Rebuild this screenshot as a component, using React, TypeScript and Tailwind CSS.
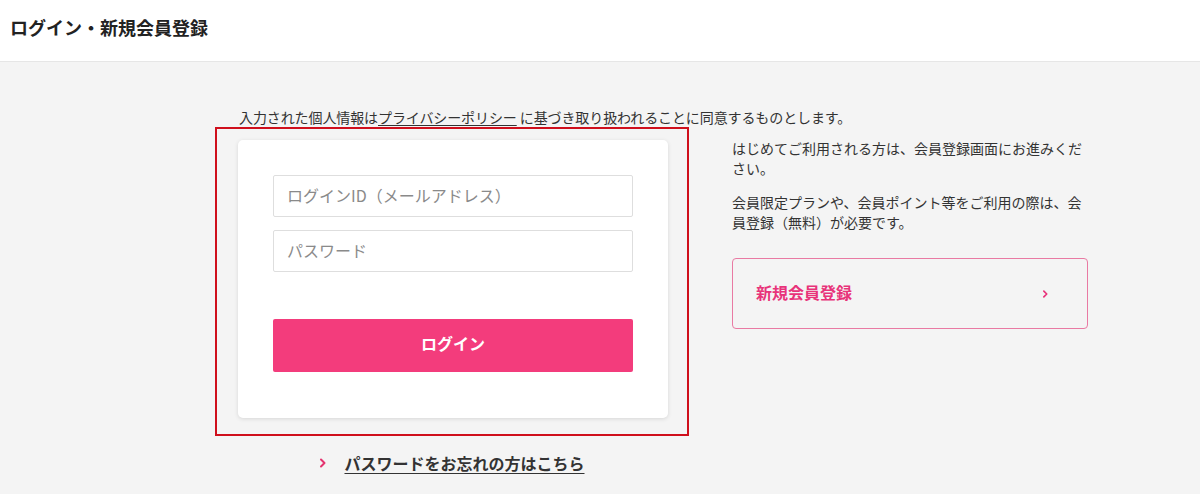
import React from "react";

const jp = { fontFamily: '"Noto Sans CJK JP", "Noto Sans", sans-serif' };

function Chevron({ className }: { className?: string }) {
  return (
    <svg viewBox="0 0 8 12" className={className} fill="none">
      <path d="M2 2.5 L5.5 6 L2 9.5" stroke="currentColor" strokeWidth="2" strokeLinecap="round" strokeLinejoin="round" />
    </svg>
  );
}

export default function App() {
  return (
    <div style={jp} className="min-h-[494px] bg-[#f4f4f4] text-[#333]">
      <header className="h-[62px] bg-white border-b border-[#e6e6e6] flex items-center pl-[10px]">
        <h1 className="text-[18px] font-bold text-[#222] leading-none -mt-[7px]">ログイン・新規会員登録</h1>
      </header>
      <main className="pt-[45px]">
        <p className="ml-[239px] text-[14px] leading-[20px] tracking-[-0.1px]">
          入力された個人情報は<span className="underline underline-offset-2">プライバシーポリシー</span> に基づき取り扱われることに同意するものとします。
        </p>
        <div className="flex">
          <div className="ml-[215px] w-[474px] flex flex-col">
            <div className="border-2 border-[#cf0f1c] pl-[21px] pr-[18px] pt-[11px] pb-[16px]">
              <div className="w-[430px] bg-white rounded-[5px] shadow-[0_1px_4px_rgba(0,0,0,0.12)] px-[35px] pt-[35px] pb-[46px]">
                <input
                  style={jp}
                  placeholder="ログインID（メールアドレス）"
                  className="block w-full h-[42px] border border-[#dedede] rounded-[2px] px-[13px] pb-[2px] text-[16px] placeholder:text-[#8a8a8a] outline-none"
                />
                <input
                  style={jp}
                  placeholder="パスワード"
                  className="block w-full h-[42px] mt-[13px] border border-[#dedede] rounded-[2px] px-[13px] pb-[2px] text-[16px] placeholder:text-[#8a8a8a] outline-none"
                />
                <button
                  style={jp}
                  className="block w-full h-[53px] mt-[47px] pb-[6px] bg-[#f33c7c] rounded-[2px] text-white text-[16px] font-bold"
                >
                  ログイン
                </button>
              </div>
            </div>
            <div className="flex items-center justify-center mt-[16px]">
              <Chevron className="w-[8px] h-[12px] text-[#e4336f]" />
              <a className="ml-[17px] text-[16px] font-bold text-[#333] underline underline-offset-3 leading-[22px]">
                パスワードをお忘れの方はこちら
              </a>
            </div>
          </div>
          <div className="ml-[43px] w-[356px] mt-[11px]">
            <p className="text-[14px] leading-[20px]">はじめてご利用される方は、会員登録画面にお進みください。</p>
            <p className="text-[14px] leading-[20px] mt-[14px]">会員限定プランや、会員ポイント等をご利用の際は、会員登録（無料）が必要です。</p>
            <a className="mt-[26px] h-[71px] pb-[4px] border border-[#e97aa3] rounded-[4px] flex items-center justify-between pl-[23px] pr-[38px]">
              <span className="text-[16px] font-bold text-[#e8337a]">新規会員登録</span>
              <Chevron className="w-[7px] h-[10px] text-[#e8337a] mt-[4px]" />
            </a>
          </div>
        </div>
      </main>
    </div>
  );
}
